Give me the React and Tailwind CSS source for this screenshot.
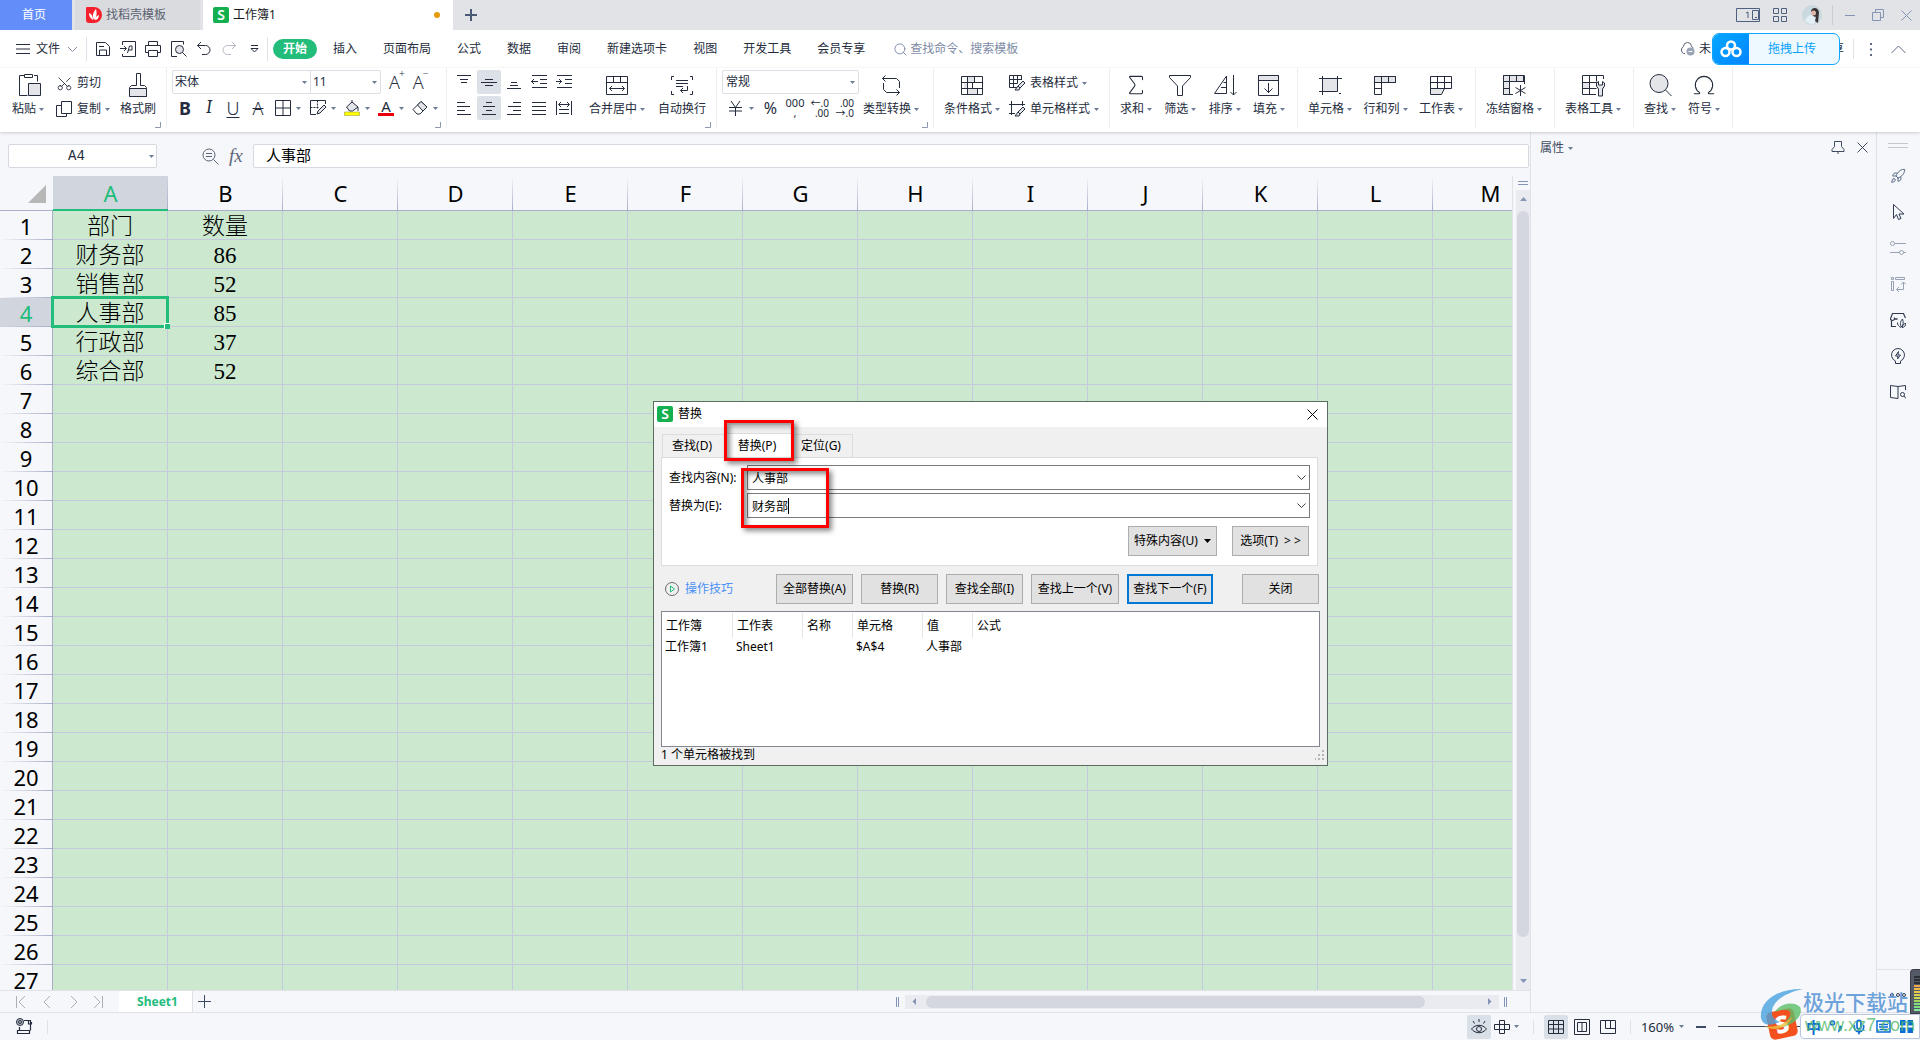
import React from 'react';
import { Rocket, Sigma, Omega, Scissors, Search, Mic } from 'lucide-react';

const columns = ['A', 'B', 'C', 'D', 'E', 'F', 'G', 'H', 'I', 'J', 'K', 'L', 'M'];
const rowCount = 27;
const data = [
    ['部门', '数量'],
    ['财务部', '86'],
    ['销售部', '52'],
    ['人事部', '85'],
    ['行政部', '37'],
    ['综合部', '52'],
];
const menuTabs = ['开始', '插入', '页面布局', '公式', '数据', '审阅', '新建选项卡', '视图', '开发工具', '会员专享'];

function Icon({ w = 24, h = 24, className = '', children }) {
    return (
        <svg width={w} height={h} viewBox={`0 0 ${w} ${h}`} fill="none" stroke="currentColor" className={`shrink-0 ${className}`} aria-hidden="true">
            {children}
        </svg>
    );
}

function Caret({ className = 'text-[#6f7c96]' }) {
    return (
        <svg width="5" height="3" viewBox="0 0 5 3" className={`shrink-0 ${className}`} aria-hidden="true">
            <path d="M0 0h5L2.5 3z" fill="currentColor" />
        </svg>
    );
}

function WpsLogo() {
    return (
        <span className="flex h-4 w-4 shrink-0 items-center justify-center rounded-[2px] bg-[#14b050] text-[14px] font-semibold leading-4 text-white">
            S
        </span>
    );
}

const GREY = '#e3e5e9';

const icons = {
    paste: (
        <Icon className="ml-[3px]">
            <path d="M6 2.5H1.5v20h8M16 2.5h3.5v6" />
            <path d="M6.5 1.5h8v3h-8z" />
            <path d="M10.5 10.5h12v12h-12z" fill={GREY} />
        </Icon>
    ),
    brush: (
        <Icon>
            <path d="M10.5 12.5V.5h4v12h4l2 2v9h-17v-9l2-2z" />
            <path d="M3.5 15.5h17v8h-17z" fill={GREY} />
        </Icon>
    ),
    merge: (
        <Icon>
            <path d="M1.5 3.5h21v18h-21zM1.5 9.5h21M8.5 3.5v6M15.5 3.5v6" />
            <path d="M4.5 15.5h15M7 13l-2.500 2.500L7 18M17 13l2.500 2.500L17 18" />
        </Icon>
    ),
    wrap: (
        <Icon>
            <path d="M4 3.500H1.500V7M20 3.500h2.500V7M4 21.500H1.500V18M20 21.500h2.500V18" />
            <path d="M6 7.500h12M6 10.500h12M6 13.500h7M17.500 13v4.500h-7M13 15l-2.500 2.500L13 20" />
        </Icon>
    ),
    convert: (
        <Icon>
            <path d="M6.500 2.500l-3 3 3 3M3.500 5.500h14l3 3V15M17.500 22.500l3-3-3-3M20.500 19.500h-13l-3-3V10" />
        </Icon>
    ),
    condition: (
        <Icon>
            <path d="M7.500 3.500h7v6h-7zM4 9.500h4v6H4zM7.500 15.500h10v6h-10z" fill={GREY} stroke="none" />
            <path d="M1.500 3.500h21v18h-21zM1.500 9.500h21M1.500 15.500h21M7.500 3.500v12M14.500 3.500v6M12.500 9.500v6M17.500 15.500v6M7.500 15.500v6" />
        </Icon>
    ),
    filter: (
        <Icon>
            <path d="M1.500 2.500h21v2l-8 8.500v9.500h-5V13l-8-8.500z" />
        </Icon>
    ),
    sort: (
        <Icon>
            <path d="M1.500 20.500L13.500 3v17.500zM8 14.500h5.500M10.500 9.500h3M20.500 2v20M17.500 19l3 3 3-3" />
        </Icon>
    ),
    fill: (
        <Icon>
            <path d="M1.500 2.500h20v5h-20z" fill={GREY} />
            <path d="M1.500 2.500h20v20h-20zM11.500 10v10M7.500 15.500l4 4 4-4" />
        </Icon>
    ),
    cell: (
        <Icon>
            <path d="M4.500 5.500h15v13h-15z" fill={GREY} />
            <path d="M1 5.500h23M4.500 3v19M1 18.500h18M19.500 3v13M21 20.500h2" />
        </Icon>
    ),
    rowcol: (
        <Icon>
            <path d="M1.500 3.500h21v6h-21z" fill={GREY} />
            <path d="M1.500 3.500h21v6h-14v12h-7zM1.500 9.500h7M8.500 3.500v6M15.500 3.500v6M1.500 15.500h7" />
        </Icon>
    ),
    sheet: (
        <Icon>
            <path d="M1.500 15.500h14l-3 6h-11z" fill={GREY} />
            <path d="M1.500 3.500h21v12h-21zM1.500 9.500h21M8.500 3.500v12M15.500 3.500v12" />
        </Icon>
    ),
    freeze: (
        <Icon>
            <path d="M1.500 2.500h20v6h-14v13h-6z" fill={GREY} />
            <path d="M11 21.500H1.500v-19h21V11M1.500 8.500h21M7.500 2.500v19M1.500 15.500h6M14.500 2.500v6" />
            <path d="M18.500 12v11M13.500 14.500l10 6M23.500 14.500l-10 6" />
        </Icon>
    ),
    tableTool: (
        <Icon>
            <path d="M1.500 9.500h7v6h-7z" fill={GREY} stroke="none" />
            <path d="M15 21.500H1.500v-19h21V6M1.500 9.500h15M1.500 15.500h14M8.500 2.500v19M15.500 2.500v6" />
            <path d="M17.500 23v-7l-2-3v-3l2-1.500V12h4V8.500l2 1.500v3l-2 3v7z" fill={GREY} />
        </Icon>
    ),
    find: (
        <Icon>
            <circle cx="11" cy="10.500" r="9" fill={GREY} />
            <path d="M17.500 17l6 6" />
        </Icon>
    ),
    sum: <Sigma size={26} strokeWidth={1} className="-my-px" />,
    omega: <Omega size={26} strokeWidth={1} className="-my-px" />,
};

function BigButton({ icon, label, caret = true }) {
    return (
        <button className="flex shrink-0 flex-col items-center gap-1 pt-[5px]">
            <span className="flex h-6 items-center">{icon}</span>
            <span className="flex h-4 items-center gap-[3px] whitespace-nowrap">
                {label}
                {caret && <Caret />}
            </span>
        </button>
    );
}

function SmallButton({ icon, label, caret = true }) {
    return (
        <button className="flex h-6 items-center gap-1 whitespace-nowrap">
            {icon}
            <span>{label}</span>
            {caret && <Caret />}
        </button>
    );
}

function Corner() {
    return (
        <Icon w={6} h={6} className="absolute bottom-0 right-[5px] text-[#8d98ae]">
            <path d="M5.500 0v5.500H0" />
        </Icon>
    );
}

function Group({ className, children }) {
    return (
        <div className={`relative flex h-[60px] shrink-0 items-start justify-between border-r border-[#eceef2] ${className}`}>
            {children}
        </div>
    );
}

function AlignButton({ lines, active, label }) {
    return (
        <button aria-label={label} className={`flex h-6 w-6 items-center justify-center ${active ? 'rounded-[2px] bg-[#dce1e7]' : ''}`}>
            <Icon w={16} h={16}>
                <path d={lines} />
            </Icon>
        </button>
    );
}

function TitleBar() {
    return (
        <header className="flex h-[30px] shrink-0 bg-[#e1e3e7]">
            <button className="w-[72px] bg-[#638efa] pr-1 text-white">首页</button>
            <button className="ml-[3px] flex w-[125px] items-center gap-1 bg-[#dadbdf] pl-[11px] text-[#5b6371]">
                <Icon w={16} h={16}>
                    <path d="M1 0h7a8 8 0 0 1 0 16H3a3 3 0 0 1-3-3V1a1 1 0 0 1 1-1z" fill="#f5222d" stroke="none" />
                    <path d="M8 13C6 9 7 5 10 2c1 4 1 8-2 11zM7 13C4 11 3 9 3 6c3 1 4 4 4 7zM9 13c0-2 1-4 4-5 0 3-2 5-4 5z" fill="#fff" stroke="none" />
                </Icon>
                找稻壳模板
            </button>
            <button className="ml-[3px] flex w-[250px] items-center gap-1 bg-white pl-[10px] text-[#16191f]">
                <WpsLogo />
                工作簿1
                <span className="ml-auto mr-[13px] h-[6px] w-[6px] rounded-full bg-[#e69b0b]" />
            </button>
            <button aria-label="新建" className="ml-3 text-[#4b5875]">
                <Icon w={12} h={12}>
                    <path d="M6 0v12M0 6h12" strokeWidth="2" />
                </Icon>
            </button>
            <div className="ml-auto flex items-center text-[#4e6080]">
                <button aria-label="窗口" className="mr-[13px]">
                    <Icon w={24} h={14}>
                        <path d="M.500.500h23v13H.500zM16.500 2.500h6v9h-6zM19 9.500h2M10 5l2-1v6" />
                    </Icon>
                </button>
                <button aria-label="应用" className="mr-[15px]">
                    <Icon w={14} h={14}>
                        <path d="M.500.500h5v5h-5zM8.500.500h5v5h-5zM.500 8.500h5v5h-5zM8.500 8.500h5v5h-5z" />
                    </Icon>
                </button>
                <Icon w={20} h={20} className="mr-[10px]">
                    <circle cx="10" cy="10" r="10" fill="#c9d9df" stroke="none" />
                    <path d="M3 16c1-4 4-6 7-6l4 4-2 5a10 10 0 0 1-9-3z" fill="#e3eff3" stroke="none" />
                    <path d="M9 6c1-4 7-4 8 1l-1 11-3-2 1-4-3-1z" fill="#3a3134" stroke="none" />
                    <circle cx="11.500" cy="8" r="2.500" fill="#dfb7aa" stroke="none" />
                </Icon>
                <span className="mr-3 h-5 w-px bg-[#c9ccd3]" />
                <div className="flex items-center text-[#8495b5]">
                    <button aria-label="最小化" className="mr-[17px]">
                        <Icon w={10} h={12}>
                            <path d="M0 6.500h10" />
                        </Icon>
                    </button>
                    <button aria-label="还原" className="mr-[17px]">
                        <Icon w={12} h={12}>
                            <path d="M.500 3.500h8v8h-8zM3.500 3.500v-3h8v8h-3" />
                        </Icon>
                    </button>
                    <button aria-label="关闭窗口" className="mr-2">
                        <Icon w={11} h={11}>
                            <path d="M.500.500l10 10M10.500.500l-10 10" />
                        </Icon>
                    </button>
                </div>
            </div>
        </header>
    );
}

function MenuBar() {
    return (
        <nav className="flex h-[38px] shrink-0 items-center bg-white pl-4">
            <button className="flex items-center gap-[6px]">
                <Icon w={14} h={10}>
                    <path d="M0 .500h14M0 5h14M0 9.500h14" />
                </Icon>
                文件
                <Icon w={9} h={6} className="ml-[2px] text-[#8a93a5]">
                    <path d="M0 1l4.500 4.500L9 1" />
                </Icon>
            </button>
            <span className="ml-[9px] mr-2 h-6 w-px bg-[#dfe2e8]" />
            <div className="flex items-center gap-[9px]">
                <button aria-label="保存">
                    <Icon w={16} h={16}>
                        <path d="M1.500 1.500h9l4 4v9h-13zM4.500 14v-5h7v5M4 5.500h5" />
                    </Icon>
                </button>
                <button aria-label="输出为PDF">
                    <Icon w={16} h={16}>
                        <path d="M2.500 4V.500h13v15h-13V13M0 7.500h6M4 5l2.500 2.500L4 10M7.500 12l2-7h2.500v4H8" />
                    </Icon>
                </button>
                <button aria-label="打印">
                    <Icon w={16} h={16}>
                        <path d="M3.500 5V.500h9V5M3 11.500H.500v-7h15v7H13M3.500 9.500h9v6h-9z" />
                    </Icon>
                </button>
                <button aria-label="打印预览" className="pl-px">
                    <Icon w={16} h={16}>
                        <path d="M6 15.500H.500V.500h12v3" />
                        <circle cx="8.500" cy="8.500" r="4" fill={GREY} />
                        <path d="M11.500 11.500l4 4" />
                    </Icon>
                </button>
                <button aria-label="撤销">
                    <Icon w={16} h={16}>
                        <path d="M5 1L1.500 4.500 5 8M1.500 4.500h8a4.500 4.500 0 0 1 0 9H6" />
                    </Icon>
                </button>
                <button aria-label="恢复" className="text-[#b6bbc5]">
                    <Icon w={16} h={16}>
                        <path d="M11 1l3.500 3.500L11 8M14.500 4.500h-8a4.500 4.500 0 0 0 0 9H10" />
                    </Icon>
                </button>
                <button aria-label="更多" className="ml-1">
                    <Icon w={9} h={8}>
                        <path d="M1 .500h7M1 3.500l3.500 3.500L8 3.500z" />
                    </Icon>
                </button>
            </div>
            <span className="ml-2 h-6 w-px bg-[#dfe2e8]" />
            <div className="ml-[5px] flex items-center gap-[6px]">
                {menuTabs.map((tab, i) => (
                    <a
                        key={tab}
                        href="#"
                        className={`whitespace-nowrap px-[10px] leading-5 ${i === 0 ? 'rounded-full bg-[#22bc7b] font-bold text-white' : ''}`}
                    >
                        {tab}
                    </a>
                ))}
            </div>
            <label className="ml-[18px] flex items-center gap-[2px] text-[#7d8aa5]">
                <Search size={15} strokeWidth={1.5} />
                <input placeholder="查找命令、搜索模板" aria-label="查找命令" className="w-[140px] outline-none placeholder:text-[#7d8aa5]" />
            </label>
            <div className="relative ml-auto mr-[14px] flex items-center">
                <Icon w={17} h={14} className="text-[#5a6579]">
                    <path d="M6 11.500H4.500a4 4 0 0 1 0-7 4 4 0 0 1 8 0l2 1.500" />
                    <circle cx="11.500" cy="9.500" r="4" fill="#98a3b5" stroke="none" />
                    <path d="M9.500 9.500h4" stroke="#fff" />
                </Icon>
                <span className="ml-[3px] flex w-[145px] justify-between">
                    <span>未</span>
                    <span>享</span>
                </span>
                <button className="absolute left-[33px] top-1/2 flex h-8 w-32 -translate-y-1/2 items-stretch overflow-hidden rounded-[7px] border border-[#0fa5ff] bg-[#eef8ff] text-[#0aa1fb]">
                    <span className="flex w-9 items-center justify-center bg-gradient-to-br from-[#06a7ff] to-[#0784ff]">
                        <Icon w={22} h={18} className="text-white">
                            <circle cx="11" cy="5.500" r="4" strokeWidth="2.500" />
                            <circle cx="5.500" cy="12" r="4" strokeWidth="2.500" />
                            <circle cx="16.500" cy="12" r="4" strokeWidth="2.500" />
                        </Icon>
                    </span>
                    <span className="flex-1 self-center pr-1">拖拽上传</span>
                </button>
                <span className="ml-[9px] h-5 w-px bg-[#dfe2e8]" />
                <button aria-label="选项" className="ml-[15px] text-[#5d6880]">
                    <Icon w={4} h={13}>
                        <path d="M2 0v2M2 5.500v2M2 11v2" strokeWidth="2" />
                    </Icon>
                </button>
                <button aria-label="收起功能区" className="ml-[18px] text-[#5d6880]">
                    <Icon w={15} h={9}>
                        <path d="M.500 8l7-7 7 7" />
                    </Icon>
                </button>
            </div>
        </nav>
    );
}

function Ribbon() {
    return (
        <section className="relative z-10 flex h-16 shrink-0 bg-white shadow-[0_1px_3px_rgba(0,0,0,0.18)]">
            <Group className="w-[167px] pl-3 pr-[10px]">
                <BigButton icon={icons.paste} label="粘贴" />
                <div className="ml-[2px] flex flex-col gap-[2px] pt-[3px]">
                    <SmallButton icon={<Scissors size={17} strokeWidth={1.2} className="-rotate-90" />} label="剪切" caret={false} />
                    <SmallButton
                        icon={
                            <Icon w={17} h={16}>
                                <path d="M5.500 4.500h-5v11h10v-3M5.500.500h10v12h-10z" />
                            </Icon>
                        }
                        label="复制"
                    />
                </div>
                <BigButton icon={icons.brush} label="格式刷" caret={false} />
                <Corner />
            </Group>

            <Group className="w-[280px] px-[5px]">
                <div className="flex flex-col gap-[2px] pt-[2px]">
                    <div className="flex h-6 items-center">
                        <span className="relative flex items-center">
                            <select aria-label="字体" className="h-6 w-[139px] appearance-none rounded-l-[2px] border border-[#dcdfe5] bg-white pl-[2px]">
                                <option>宋体</option>
                            </select>
                            <Caret className="absolute right-1 text-[#6f7c96]" />
                        </span>
                        <span className="relative -ml-px flex items-center">
                            <select aria-label="字号" className="h-6 w-[71px] appearance-none rounded-r-[2px] border border-[#dcdfe5] bg-white pl-[2px]">
                                <option>11</option>
                            </select>
                            <Caret className="absolute right-1 text-[#6f7c96]" />
                        </span>
                        <button aria-label="增大字号" className="ml-2 flex items-start text-[18px] font-light leading-5">A<sup className="-ml-px text-[10px] leading-3">+</sup></button>
                        <button aria-label="减小字号" className="ml-2 flex items-start text-[18px] font-light leading-5">A<sup className="-ml-px text-[10px] leading-3">−</sup></button>
                    </div>
                    <div className="flex h-6 items-center pl-[5px] text-[18px] leading-6">
                        <button aria-label="加粗" className="w-4 font-bold">B</button>
                        <button aria-label="倾斜" className="ml-2 w-4 font-serif italic">I</button>
                        <button aria-label="下划线" className="ml-2 w-4 font-light underline underline-offset-2">U</button>
                        <button aria-label="删除线" className="ml-[9px] w-4 font-light line-through decoration-1">A</button>
                        <button aria-label="边框" className="ml-[9px] flex items-center gap-[5px]">
                            <Icon w={16} h={16}>
                                <path d="M.500.500h15v15H.500zM8 .500v15M.500 8h15" />
                            </Icon>
                            <Caret />
                        </button>
                        <button aria-label="绘图边框" className="ml-[9px] flex items-center gap-[5px]">
                            <Icon w={16} h={16}>
                                <path d="M6 14.500H.500V.500h15V4" />
                                <path d="M.500 7.500h8M7.500.500v8" strokeDasharray="2 1" />
                                <path d="M8 11l6-6 2 2-6 6-3 1z" fill={GREY} />
                            </Icon>
                            <Caret />
                        </button>
                        <button aria-label="填充颜色" className="ml-[8px] flex items-center gap-[5px]">
                            <Icon w={16} h={16}>
                                <path d="M2.500 7L8 2l6 5-5.500 4h-3zM8 2V0M14 7v4" fill={GREY} />
                                <path d="M.500 12h15v3.500H.500z" fill="#ff0" stroke="#8b8d2a" strokeWidth=".5" />
                            </Icon>
                            <Caret />
                        </button>
                        <button aria-label="字体颜色" className="ml-[8px] flex items-center gap-[5px]">
                            <span className="flex h-4 w-4 items-end justify-center border-b-[3px] border-red-600 text-[15px] leading-[14px]">A</span>
                            <Caret />
                        </button>
                        <button aria-label="清除" className="ml-[8px] flex items-center gap-[5px]">
                            <Icon w={16} h={16}>
                                <path d="M1 9.500L9 1.500l6 5.500-7 7H5z" />
                                <path d="M5.500 5L9 1.500l6 5.500-4 4z" fill={GREY} />
                            </Icon>
                            <Caret />
                        </button>
                    </div>
                </div>
                <Corner />
            </Group>

            <Group className="w-[270px] pl-[5px] pr-[10px]">
                <div className="grid grid-cols-5 gap-x-px gap-y-[2px] pt-[2px]">
                    <AlignButton label="顶端对齐" lines="M1 1.500h14M4 5.500h8M5 8.500h6" />
                    <AlignButton label="垂直居中" active lines="M0 8.500h16M4 5.500h8M4 11.500h8" />
                    <AlignButton label="底端对齐" lines="M5 8.500h6M4 11.500h8M1 14.500h14" />
                    <AlignButton label="减少缩进" lines="M1 1.500h15M9 5.500h7M9 9.500h7M1 13.500h15M0 7.500h7M3 5L.500 7.500 3 10" />
                    <AlignButton label="增加缩进" lines="M1 1.500h15M9 5.500h7M9 9.500h7M1 13.500h15M0 7.500h6M3 5l2.500 2.500L3 10" />
                    <AlignButton label="左对齐" lines="M1 2.500h8M1 6.500h13M1 10.500h8M1 14.500h14" />
                    <AlignButton label="水平居中" active lines="M5 2.500h6M2 6.500h12M5 10.500h6M1 14.500h14" />
                    <AlignButton label="右对齐" lines="M7 2.500h8M2 6.500h13M7 10.500h8M1 14.500h14" />
                    <AlignButton label="两端对齐" lines="M1 2.500h14M1 6.500h14M1 10.500h14M1 14.500h14" />
                    <AlignButton label="分散对齐" lines="M.500 1v14M15.500 1v14M3 9.500h10M3 13.500h10M3 4.500h10M5 2L2.500 4.500 5 7M11 2l2.500 2.500L11 7" />
                </div>
                <BigButton icon={icons.merge} label="合并居中" />
                <BigButton icon={icons.wrap} label="自动换行" caret={false} />
                <Corner />
            </Group>

            <Group className="w-[217px] pl-[5px] pr-[14px]">
                <div className="flex flex-col gap-[2px] pt-[2px]">
                    <span className="relative flex h-6 items-center">
                        <select aria-label="数字格式" className="h-6 w-[137px] appearance-none rounded-[2px] border border-[#dcdfe5] bg-white pl-[3px]">
                            <option>常规</option>
                        </select>
                        <Caret className="absolute right-1 text-[#6f7c96]" />
                    </span>
                    <div className="flex h-6 items-center pl-[6px]">
                        <button aria-label="货币" className="flex items-center gap-[6px]">
                            <Icon w={15} h={16}>
                                <path d="M3 1l4.500 6.500L12 1M1 7.500h13M1 11h13M7.500 7.500V16" />
                            </Icon>
                            <Caret />
                        </button>
                        <button aria-label="百分比" className="ml-[9px] w-[15px] text-[16px] leading-6">%</button>
                        <button aria-label="千位分隔" className="ml-[7px] w-5 text-[11px] leading-[10px]">000<br />,</button>
                        <button aria-label="增加小数位" className="ml-[4px] w-5 text-right text-[10px] leading-[10px]">←.0<br />.00</button>
                        <button aria-label="减少小数位" className="ml-[5px] w-5 text-right text-[10px] leading-[10px]">.00<br />→.0</button>
                    </div>
                </div>
                <BigButton icon={icons.convert} label="类型转换" />
                <Corner />
            </Group>

            <Group className="w-[176px] px-[10px]">
                <BigButton icon={icons.condition} label="条件格式" />
                <div className="flex flex-col gap-[2px] pt-[3px]">
                    <SmallButton
                        icon={
                            <Icon w={17} h={16}>
                                <path d="M8 12.500H.500V.500h12V5M.500 4.500h12M.500 8.500h8M4.500.500v12M8.500.500v8" />
                                <path d="M9 11l5-5 2 2-5 5zM9 11l-3 4h4l1-2" fill={GREY} />
                            </Icon>
                        }
                        label="表格样式"
                    />
                    <SmallButton
                        icon={
                            <Icon w={17} h={16}>
                                <path d="M0 3.500h16M2.500 0v14M13.500 0v5M0 12.500h6" />
                                <path d="M9 11l5-5 2 2-5 5zM9 11l-3 4h4l1-2" fill={GREY} />
                            </Icon>
                        }
                        label="单元格样式"
                    />
                </div>
            </Group>

            <Group className="w-[188px] pl-[10px] pr-3">
                <BigButton icon={icons.sum} label="求和" />
                <BigButton icon={icons.filter} label="筛选" />
                <BigButton icon={icons.sort} label="排序" />
                <BigButton icon={icons.fill} label="填充" />
            </Group>
            <Group className="w-[178px] pl-[10px] pr-3">
                <BigButton icon={icons.cell} label="单元格" />
                <BigButton icon={icons.rowcol} label="行和列" />
                <BigButton icon={icons.sheet} label="工作表" />
            </Group>
            <Group className="w-[79px] px-[10px]">
                <BigButton icon={icons.freeze} label="冻结窗格" />
            </Group>
            <Group className="w-[79px] px-[10px]">
                <BigButton icon={icons.tableTool} label="表格工具" />
            </Group>
            <Group className="w-[99px] pl-[10px] pr-3">
                <BigButton icon={icons.find} label="查找" />
                <BigButton icon={icons.omega} label="符号" />
            </Group>
        </section>
    );
}

function FormulaBar() {
    return (
        <div className="flex h-11 shrink-0 items-start gap-[3px] pl-2 pr-px pt-3">
            <div className="relative flex items-center">
                <input
                    aria-label="名称框"
                    defaultValue="A4"
                    className="h-6 w-[149px] rounded-[2px] border border-[#d6d9e0] bg-white pr-3 text-center font-['Liberation_Mono',monospace] text-[14px] outline-none"
                />
                <Caret className="absolute right-[3px] text-[#6f7c96]" />
            </div>
            <div className="ml-[42px] flex h-6 items-center gap-[10px] text-[#5d6678]">
                <Icon w={17} h={17}>
                    <circle cx="7" cy="7" r="6" />
                    <path d="M4 5.500h6M4 8.500h6M11.500 11.500l5 5" />
                </Icon>
                <span className="w-[21px] font-['Liberation_Serif',serif] text-[19px] italic leading-6">fx</span>
            </div>
            <input
                aria-label="编辑栏"
                defaultValue="人事部"
                className="h-6 flex-1 rounded-[2px] border border-[#d6d9e0] bg-white pb-[3px] pl-3 text-[15px] leading-5 text-black outline-none"
            />
        </div>
    );
}

function SheetGrid() {
    return (
        <div className="min-w-0 flex-1 overflow-hidden border-r border-[#e0e2e8] bg-[#cce8cf]">
            <table className="w-full table-fixed border-separate border-spacing-0 text-[23px] leading-6 text-black">
                <colgroup>
                    <col className="w-[53px]" />
                    {columns.map((c) => (
                        <col key={c} className="w-[115px]" />
                    ))}
                </colgroup>
                <thead>
                    <tr className="h-[35px]">
                        <th className="relative border-b border-[#a9afca] bg-[#f5f7fa] p-0">
                            <Icon w={18} h={18} className="absolute bottom-[7px] right-[7px]">
                                <path d="M18 0v18H0z" fill="#b7b7b7" stroke="none" />
                            </Icon>
                        </th>
                        {columns.map((c, i) => (
                            <th
                                key={c}
                                className={`relative p-0 text-[22px] font-normal leading-8 ${i === 0 ? 'border-b-2 border-[#22bc7b] bg-[#d1d5dd] text-[#22bc7b]' : 'border-b border-[#a9afca] bg-[#f5f7fa]'}`}
                            >
                                {c}
                                <span className="absolute inset-y-0 right-0 w-px bg-gradient-to-b from-transparent to-[#a9afca]" />
                            </th>
                        ))}
                    </tr>
                </thead>
                <tbody>
                    {Array.from({ length: rowCount }, (_, r) => (
                        <tr key={r} className="h-[29px]">
                            <th
                                className={`relative border-r border-[#a9afca] p-0 text-[22px] font-normal ${r === 3 ? 'bg-[#d1d5dd] text-[#22bc7b]' : 'bg-[#f5f7fa]'}`}
                            >
                                {r + 1}
                                <span className="absolute inset-x-0 bottom-0 h-px bg-gradient-to-r from-transparent to-[#a9afca]" />
                            </th>
                            {columns.map((c, i) => (
                                <td
                                    key={c}
                                    className="relative border-b border-r border-[#c5c9dc] p-0 pt-1 text-center font-['Liberation_Serif','Noto_Sans_CJK_SC',serif] font-light"
                                >
                                    {data[r]?.[i]}
                                    {r === 3 && i === 0 && (
                                        <span className="absolute -inset-[2px] z-[1] border-[3px] border-[#22bc7b]">
                                            <span className="absolute -bottom-[4px] -right-[4px] h-[6px] w-[6px] border-l border-t border-white bg-[#22bc7b]" />
                                        </span>
                                    )}
                                </td>
                            ))}
                        </tr>
                    ))}
                </tbody>
            </table>
        </div>
    );
}

function VerticalScroll() {
    return (
        <div className="flex w-[17px] shrink-0 flex-col items-end">
            <Icon w={14} h={14} className="text-[#8495b5]">
                <path d="M2 5.500h10M2 8.500h10" />
            </Icon>
            <div className="flex w-[14px] flex-1 flex-col items-center bg-[#e9ebf0] text-[#8495b5]">
                <Icon w={7} h={21}>
                    <path d="M0 11h7L3.500 7z" fill="currentColor" stroke="none" />
                </Icon>
                <div className="w-3 flex-1 rounded-full bg-[#d4d7df]" />
                <Icon w={7} h={53}>
                    <path d="M0 42h7l-3.500 4z" fill="currentColor" stroke="none" />
                </Icon>
            </div>
        </div>
    );
}

function SheetTabs() {
    return (
        <div className="flex h-[22px] shrink-0 items-center border-t border-[#e0e2e8]">
            <div className="flex w-[119px] items-center gap-[15px] pl-4 text-[#a8adb8]">
                <button aria-label="第一张">
                    <Icon w={10} h={12}>
                        <path d="M.500 0v12M9 0L3 6l6 6" />
                    </Icon>
                </button>
                <button aria-label="上一张">
                    <Icon w={10} h={12}>
                        <path d="M9 0L3 6l6 6" />
                    </Icon>
                </button>
                <button aria-label="下一张" className="ml-[2px]">
                    <Icon w={10} h={12}>
                        <path d="M3 0l6 6-6 6" />
                    </Icon>
                </button>
                <button aria-label="最后一张">
                    <Icon w={10} h={12}>
                        <path d="M1 0l6 6-6 6M9.500 0v12" />
                    </Icon>
                </button>
            </div>
            <button className="h-full w-[74px] border-r border-[#e0e2e8] bg-white pl-1 font-bold text-[#22bc7b]">Sheet1</button>
            <button aria-label="新建工作表" className="ml-[5px] text-[#3d4a66]">
                <Icon w={13} h={13}>
                    <path d="M6.500 0v13M0 6.500h13" />
                </Icon>
            </button>
            <div className="ml-auto flex w-[634px] items-center text-[#8495b5]">
                <Icon w={3} h={10}>
                    <path d="M.500 0v10M2.500 0v10" />
                </Icon>
                <div className="ml-[6px] flex h-[14px] flex-1 items-center bg-[#e9ebf0]">
                    <Icon w={21} h={7}>
                        <path d="M11 0v7L7.500 3.500z" fill="currentColor" stroke="none" />
                    </Icon>
                    <div className="h-3 flex-1 rounded-full bg-[#d4d7df]" />
                    <Icon w={74} h={7}>
                        <path d="M63 0v7l3.500-3.500z" fill="currentColor" stroke="none" />
                    </Icon>
                </div>
                <Icon w={3} h={10} className="ml-[5px] mr-[23px]">
                    <path d="M.500 0v10M2.500 0v10" />
                </Icon>
            </div>
        </div>
    );
}

function PropertyPane() {
    return (
        <aside className="flex w-[347px] shrink-0 items-start border-x border-[#dfe2e9] pl-[9px] pr-2 pt-[8px] text-[#414c63]">
            <button className="flex h-4 items-center gap-1">
                属性
                <Caret />
            </button>
            <button aria-label="固定" className="ml-auto mr-3">
                <Icon w={14} h={14}>
                    <path d="M3.500 1.500h7v5l2.500 3v2H1v-2l2.500-3zM7 11.500V14" />
                </Icon>
            </button>
            <button aria-label="关闭属性" className="pt-[2px]">
                <Icon w={11} h={11}>
                    <path d="M.500.500l10 10M10.500.500l-10 10" />
                </Icon>
            </button>
        </aside>
    );
}

function SideBar() {
    return (
        <aside className="flex flex-1 flex-col items-center pr-[2px] pt-[11px] text-[#2f3a50]">
            <Icon w={20} h={5} className="text-[#c4c8d0]">
                <path d="M0 .500h20M0 4.500h20" />
            </Icon>
            <div className="mt-5 flex flex-col items-center gap-5">
                <button aria-label="推荐"><Rocket size={16} strokeWidth={1.5} className="text-[#5b6b88]" /></button>
                <button aria-label="选择">
                    <Icon w={16} h={16}>
                        <path d="M3.500.500v14l3-4 2 5 2.500-1-2-4.500H14z" />
                    </Icon>
                </button>
                <button aria-label="属性设置" className="text-[#98a2b4]">
                    <Icon w={16} h={16}>
                        <circle cx="2.500" cy="3.500" r="2" />
                        <circle cx="11.500" cy="12.500" r="2" />
                        <path d="M4.500 3.500H16M0 12.500h9.500M13.500 12.500H16" />
                    </Icon>
                </button>
                <button aria-label="转置" className="text-[#98a2b4]">
                    <Icon w={16} h={16}>
                        <path d="M1.500 1.500h2v2h-2zM5.500 1.500h9v2h-9zM1.500 5.500h2v9h-2zM13.500 6v7.500h-7M11 8.500L13.500 6 16 8.500M9 11l-2.500 2.500L9 16" />
                    </Icon>
                </button>
                <button aria-label="素材">
                    <Icon w={16} h={16}>
                        <path d="M6 14.500H1.500V8M.500 6.500L2.500 1.500h11l2 4.500M.500 6.500a2 2 0 0 0 4 0 2 2 0 0 0 3 0" strokeWidth="1.200" />
                        <path d="M11.500 15c-2-3-1-6 1-8 1 3 1 6-1 8zM11 15.500c-2-1-4-3-3.500-5M12 15.500c1-3 2-4 4-4 0 2-2 4-4 4z" />
                    </Icon>
                </button>
                <button aria-label="灵感">
                    <Icon w={16} h={16}>
                        <path d="M5.500 13A6.500 6.500 0 1 1 10.500 13v2.500h-5zM8.500 3.500L5.500 8H8l-.5 3L10.500 7H8z" />
                    </Icon>
                </button>
                <button aria-label="查阅">
                    <Icon w={16} h={16}>
                        <path d="M15.500 6V1.500L8 2.500.500 1.500v12l7.500 1V2.500" />
                        <circle cx="12.500" cy="10.500" r="2" />
                        <path d="M14 12l2 2.500" />
                    </Icon>
                </button>
            </div>
            <div className="mt-auto flex h-[43px] w-full items-center justify-center border-t border-[#e0e2e8]">
                <Icon w={16} h={4} className="mt-2">
                    <circle cx="2" cy="2" r="1.500" />
                    <circle cx="8" cy="2" r="1.500" />
                    <circle cx="14" cy="2" r="1.500" />
                </Icon>
            </div>
        </aside>
    );
}

function StatusBar() {
    return (
        <footer className="flex h-7 shrink-0 items-center border-t border-[#e0e2e8]">
            <button aria-label="录制" className="ml-4">
                <Icon w={17} h={17}>
                    <circle cx="4" cy="4" r="3.500" fill="#b9bfca" />
                    <circle cx="4" cy="4" r="1.500" />
                    <path d="M8 2.500h6.500v10M1.500 12.500h12v3h-12zM3.500 9v3M12.500 2.500V6h3V4" strokeWidth="1.200" />
                </Icon>
            </button>
            <span className="ml-[14px] h-[14px] w-px bg-[#dfe2e8]" />
            <div className="ml-auto flex h-full items-center">
                <button aria-label="护眼模式" className="flex h-6 w-6 items-center justify-center rounded-[2px] bg-[#dae0e7]">
                    <Icon w={16} h={16}>
                        <path d="M.500 10c4-5 11-5 15 0-4 5-11 5-15 0zM8 0v3M2 2l1.500 2.500M14 2l-1.500 2.500" />
                        <circle cx="8" cy="10" r="2.500" />
                    </Icon>
                </button>
                <button aria-label="阅读模式" className="ml-[3px] flex items-center gap-1">
                    <Icon w={16} h={14}>
                        <path d="M5.500.500h5v13h-5zM.500 4.500h15v5H.500z" />
                    </Icon>
                    <Caret />
                </button>
                <span className="ml-[14px] mr-[10px] h-[14px] w-px bg-[#dfe2e8]" />
                <button aria-label="普通视图" className="flex h-6 w-6 items-center justify-center rounded-[2px] bg-[#dae0e7]">
                    <Icon w={16} h={14}>
                        <path d="M.500.500h15v13H.500zM.500 4.500h15M.500 9h15M5.500.500v13M10.500.500v13" />
                    </Icon>
                </button>
                <button aria-label="页面布局视图" className="ml-[6px]">
                    <Icon w={16} h={16}>
                        <path d="M.500.500h15v15H.500zM3.500 3.500h9v9h-9zM8 3.500v9" />
                    </Icon>
                </button>
                <button aria-label="分页预览" className="ml-[10px]">
                    <Icon w={16} h={14}>
                        <path d="M.500.500h15v13H.500zM5.500.500v8h10M10.500.500v8" />
                    </Icon>
                </button>
                <span className="ml-[14px] mr-[10px] h-[14px] w-px bg-[#dfe2e8]" />
                <button className="flex items-center gap-[5px] text-[13px]">
                    160%
                    <Caret />
                </button>
                <button aria-label="缩小" className="ml-3 h-[2px] w-[10px] bg-[#3d4a66]" />
                <input type="range" aria-label="缩放" className="ml-3 mr-[54px] h-px w-[148px] appearance-none bg-[#3d4a66] [&::-webkit-slider-thumb]:appearance-none" />
            </div>
        </footer>
    );
}

function DialogButton({ className = 'w-[77px]', children }) {
    return (
        <button className={`flex h-[30px] shrink-0 items-center justify-center whitespace-nowrap border bg-[#e1e1e1] ${className}`}>
            {children}
        </button>
    );
}

function ComboField({ id, label, value }) {
    return (
        <div className="flex items-center">
            <label htmlFor={id} className="w-[78px] whitespace-nowrap">{label}</label>
            <div className="relative flex flex-1 items-center">
                <input id={id} defaultValue={value} className="h-[25px] w-full border border-[#7a7a7a] bg-white pl-1 outline-none" />
                <Icon w={9} h={6} className="absolute right-1 text-[#444]">
                    <path d="M.500.500l4 4 4-4" />
                </Icon>
            </div>
        </div>
    );
}

function ReplaceDialog() {
    return (
        <div role="dialog" aria-label="替换" className="absolute left-[653px] top-[401px] z-20 flex h-[365px] w-[675px] flex-col border border-[#5d6c61] bg-[#f0f0f0] text-black">
            <div className="flex h-[25px] shrink-0 items-center gap-[5px] bg-white pb-px pl-[3px] pr-[9px]">
                <WpsLogo />
                替换
                <button aria-label="关闭对话框" className="ml-auto">
                    <Icon w={11} h={11}>
                        <path d="M.500.500l10 10M10.500.500l-10 10" />
                    </Icon>
                </button>
            </div>
            <div className="mt-[6px] flex items-end pl-2">
                <button className="h-[23px] w-[63px] border border-b-0 border-[#dcdcdc] pr-3 text-right">查找(D)</button>
                <button className="h-6 w-[66px] border-t border-[#dcdcdc] bg-white pr-[2px]">替换(P)</button>
                <button className="h-[23px] w-[62px] border border-b-0 border-[#dcdcdc] pr-[2px]">定位(G)</button>
            </div>
            <div className="ml-[7px] mr-[9px] flex h-[109px] shrink-0 flex-col gap-[3px] border border-[#dcdcdc] bg-white px-[7px] pt-[7px]">
                <ComboField id="find" label="查找内容(N):" value="人事部" />
                <ComboField id="replace" label="替换为(E):" value="财务部" />
                <div className="mt-[5px] flex justify-end gap-[15px] pr-px">
                    <DialogButton className="w-[89px] gap-[6px] border-[#adadad]">
                        特殊内容(U)
                        <Icon w={7} h={4}>
                            <path d="M0 0h7L3.500 4z" fill="#000" stroke="none" />
                        </Icon>
                    </DialogButton>
                    <DialogButton className="w-[77px] gap-[6px] border-[#adadad]">
                        选项(T) <span>&gt; &gt;</span>
                    </DialogButton>
                </div>
            </div>
            <div className="mt-2 flex items-center gap-2 pl-[11px] pr-2">
                <a href="#" className="flex items-center gap-[6px] text-[#4a90f5]">
                    <Icon w={14} h={14}>
                        <circle cx="7" cy="7" r="6.500" stroke="#6b6b6b" />
                        <path d="M5.500 4l4 3-4 3z" stroke="#22bc7b" />
                    </Icon>
                    操作技巧
                </a>
                <div className="ml-auto flex gap-2">
                    <DialogButton className="w-[77px] border-[#adadad]">全部替换(A)</DialogButton>
                    <DialogButton className="w-[77px] border-[#adadad]">替换(R)</DialogButton>
                    <DialogButton className="w-[77px] border-[#adadad]">查找全部(I)</DialogButton>
                    <DialogButton className="w-[88px] border-[#adadad]">查找上一个(V)</DialogButton>
                    <DialogButton className="w-[86px] border-2 border-[#0078d7]">查找下一个(F)</DialogButton>
                </div>
                <DialogButton className="ml-[21px] w-[77px] border-[#adadad]">关闭</DialogButton>
            </div>
            <div className="ml-[7px] mr-[7px] mt-[7px] h-[136px] shrink-0 border border-[#828790] bg-white pt-px">
                <table className="w-full table-fixed border-separate border-spacing-0 text-left">
                    <thead>
                        <tr className="h-[25px]">
                            {['工作簿', '工作表', '名称', '单元格', '值', '公式'].map((h, i) => (
                                <th
                                    key={h}
                                    className={`border-[#e5e5e5] py-0 pl-1 pr-0 font-normal ${['w-[71px] border-r', 'w-[70px] border-r', 'w-[50px] border-r', 'w-[70px] border-r', 'w-[50px] border-r', ''][i]}`}
                                >
                                    {h}
                                </th>
                            ))}
                        </tr>
                    </thead>
                    <tbody>
                        <tr className="h-[18px]">
                            {['工作簿1', 'Sheet1', '', '$A$4', '人事部', ''].map((v, i) => (
                                <td key={i} className="py-0 pl-[3px] pr-0">{v}</td>
                            ))}
                        </tr>
                    </tbody>
                </table>
            </div>
            <div className="flex items-center justify-between pl-[7px] pr-[2px] leading-[15px]">
                1 个单元格被找到
                <Icon w={10} h={10} className="text-[#b5b5b5]">
                    <path d="M8 0v2M8 4v2M8 8v2M4 4v2M4 8v2M0 8v2" strokeWidth="2" />
                </Icon>
            </div>
            <div className="absolute left-[70px] top-[18px] h-[41px] w-[70px] border-[3px] border-[#fe0000] shadow-[3px_3px_5px_rgba(0,0,0,0.45),inset_3px_3px_5px_rgba(0,0,0,0.45)]" />
            <div className="absolute left-[87px] top-[66px] h-[60px] w-[88px] border-[3px] border-[#fe0000] shadow-[3px_3px_5px_rgba(0,0,0,0.45),inset_3px_3px_5px_rgba(0,0,0,0.45)]" />
            <span className="absolute left-[134px] top-[96px] h-4 w-px bg-black" />
        </div>
    );
}

// Input method bar, level meter and site mark in the bottom right corner
function DesktopOverlay() {
    return (
        <div className="absolute bottom-0 right-0 z-30 h-[72px] w-40">
            <div className="absolute bottom-[26px] right-0 flex h-[45px] w-[10px] flex-col items-end gap-px rounded-tl border border-r-0 border-[#3b3e49] bg-[#555a67] pt-[6px]">
                {['bg-[#2c2e36]', 'bg-[#2c2e36]', 'bg-[#2c2e36]', 'bg-[#f0a848]', 'bg-[#f0b848]', 'bg-[#e8c850]', 'bg-[#d8d050]', 'bg-[#c8d850]', 'bg-[#a0d860]', 'bg-[#80e080]', 'bg-[#80e080]', 'bg-[#80e8a0]'].map((c, i) => (
                    <span key={i} className={`h-[2px] w-[6px] shrink-0 ${c}`} />
                ))}
            </div>
            <div className="absolute bottom-px right-0 flex h-[25px] w-[120px] items-center justify-between rounded-l border border-[#b9c6de] bg-white pl-[5px] pr-[6px] text-[#0b6bd8]">
                <span className="text-[15px] font-bold">中</span>
                <Icon w={12} h={14}>
                    <circle cx="2.500" cy="3" r="2" strokeWidth="1.500" />
                    <path d="M9 7a1.500 1.500 0 1 1 1 2c0 2-1 3-2 3" fill="currentColor" />
                </Icon>
                <Mic size={16} strokeWidth={2.500} />
                <Icon w={15} h={13}>
                    <path d="M1 1h13v11H1zM3 4.500h9M3 7h9M4 9.500h7" strokeWidth="1.500" />
                </Icon>
                <Icon w={13} h={13}>
                    <path d="M0 0h5.500v5.500H0zM7.500 0H13v5.500H7.500zM0 7.500h5.500V13H0zM7.500 7.500H13V13H7.500z" fill="currentColor" stroke="none" />
                </Icon>
            </div>
            <span className="absolute bottom-[2px] left-2 flex h-7 w-7 -rotate-12 items-center justify-center rounded-[5px] bg-[#f4511e] text-[24px] font-black leading-7 text-white">
                S
            </span>
            <Icon w={46} h={44} className="absolute bottom-2 left-0 opacity-80">
                <path d="M1 30C-1 12 20 0 43 1 24 5 12 14 12 24c0 6 3 8 8 10-10 4-17 4-19-4z" fill="#4aa3e0" stroke="none" />
                <path d="M15 24c4-8 18-12 25-5 4 8-6 19-22 21 8-6 14-12 12-16-2-3-8-3-15 0z" fill="#5cc06a" stroke="none" />
                <path d="M4 38c10 2 20-1 28-9-4 10-16 16-28 9z" fill="#f0c23c" stroke="none" />
            </Icon>
            <div className="absolute bottom-[26px] left-[43px] whitespace-nowrap text-[21px] font-medium leading-6 text-[#5b96d6]/90">极光下载站</div>
            <div className="absolute bottom-[5px] left-[45px] font-['Liberation_Sans',sans-serif] text-[18px] leading-5 text-[#4fb86a]/80">www.xz7.com</div>
        </div>
    );
}

function App() {
    return (
        <div className="relative flex h-screen w-full flex-col overflow-hidden bg-[#f5f7fa] font-['Noto_Sans','Noto_Sans_CJK_SC',sans-serif] text-[12px] leading-4 text-[#242c3d]">
            <TitleBar />
            <MenuBar />
            <Ribbon />
            <div className="flex min-h-0 flex-1">
                <main className="flex w-[1530px] min-w-0 shrink-0 flex-col">
                    <FormulaBar />
                    <div className="flex min-h-0 flex-1">
                        <SheetGrid />
                        <VerticalScroll />
                    </div>
                    <SheetTabs />
                </main>
                <PropertyPane />
                <SideBar />
            </div>
            <StatusBar />
            <ReplaceDialog />
            <DesktopOverlay />
        </div>
    );
}

export default App;
